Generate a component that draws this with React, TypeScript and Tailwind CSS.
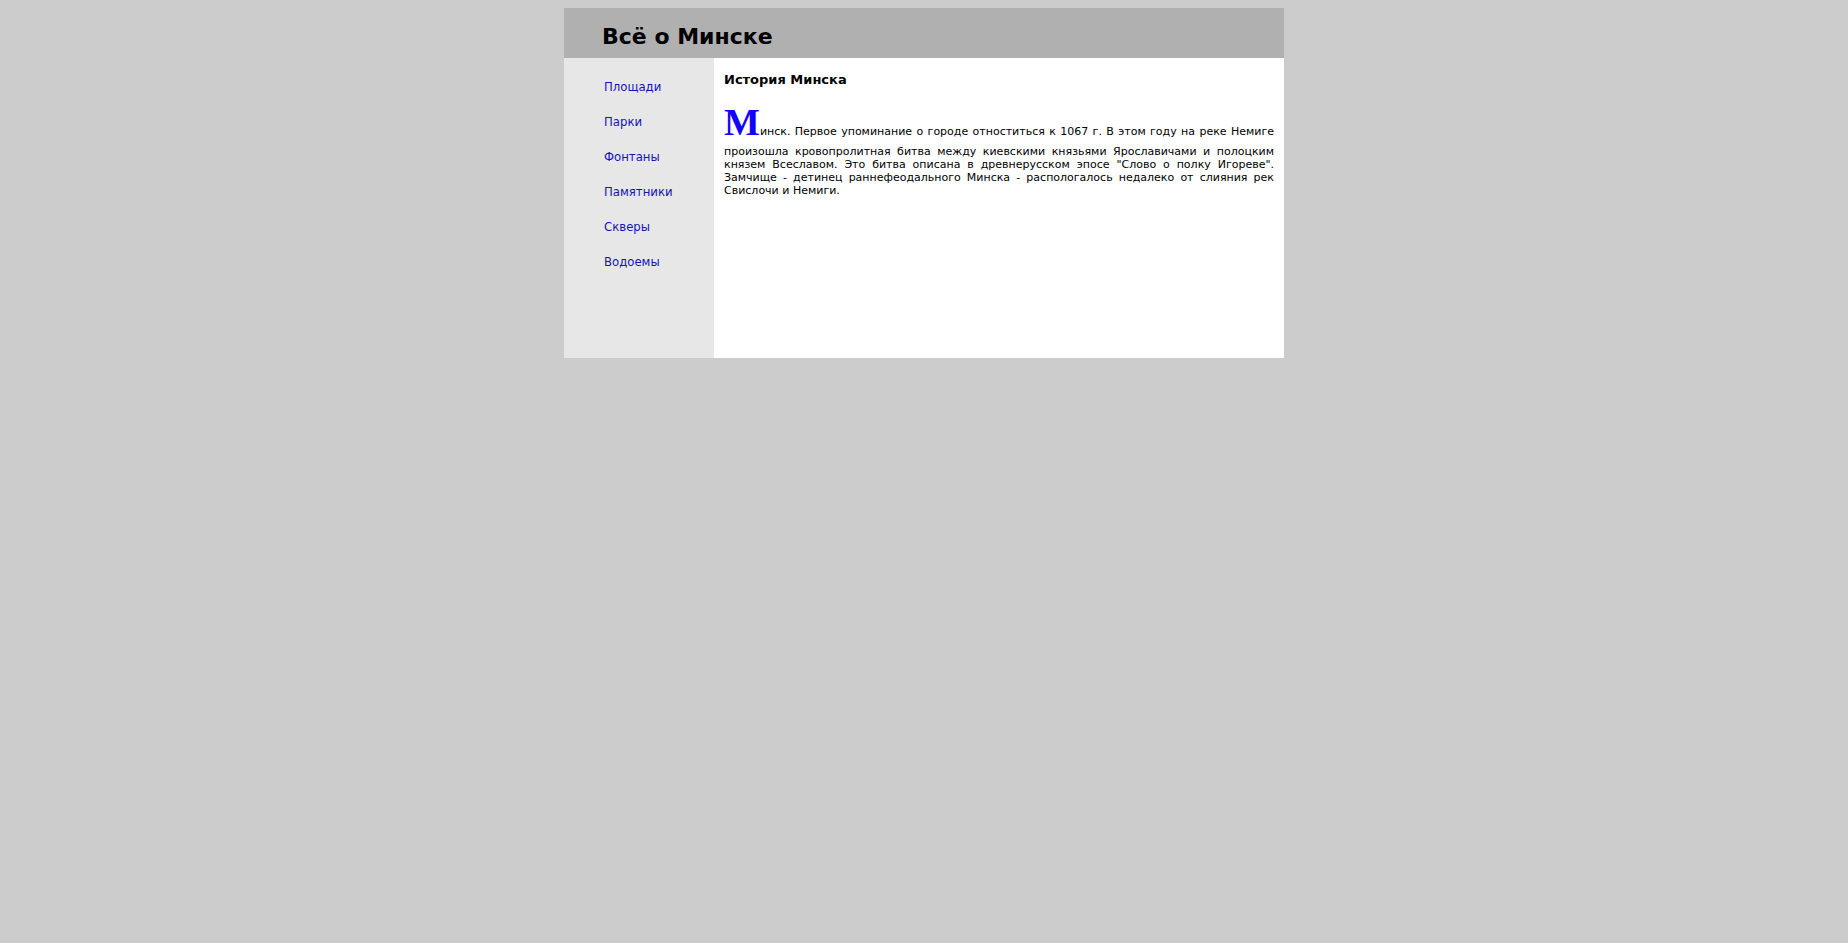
const links = ["Площади", "Парки", "Фонтаны", "Памятники", "Скверы", "Водоемы"];

export default function App() {
  return (
    <div className="min-h-screen bg-[#cccccc] py-2 font-['DejaVu_Sans',sans-serif] text-black">
      <div className="mx-auto w-full max-w-[720px] bg-white">
        <header className="bg-[#b0b0b0] pt-[18px] pr-4 pb-[10px] pl-[38px]">
          <h1 className="text-[22px] leading-[22px] font-bold">Всё о Минске</h1>
        </header>
        <div className="flex min-h-[300px]">
          <nav className="w-[150px] shrink-0 bg-[#e7e7e7] pt-[11px] pl-10 font-['DejaVu_Sans_Condensed','DejaVu_Sans',sans-serif]">
            <ul>
              {links.map((name) => (
                <li key={name}>
                  <a href="#" className="block text-[13px] leading-[35px] text-[#1414b8]">
                    {name}
                  </a>
                </li>
              ))}
            </ul>
          </nav>
          <main className="min-w-0 flex-1 px-[10px] pt-[14px]">
            <h2 className="text-[13px] leading-[15px] font-bold">История Минска</h2>
            <p className="mt-[13px] text-justify text-[11px] leading-[13px]">
              <span className="font-['Liberation_Serif',serif] text-[38px] leading-[45px] font-bold text-[#1400ff]">М</span>
              инск. Первое упоминание о городе отноститься к 1067 г. В этом году на реке Немиге произошла кровопролитная битва между киевскими князьями Ярославичами и полоцким князем Всеславом. Это битва описана в древнерусском эпосе "Слово о полку Игореве". Замчище - детинец раннефеодального Минска - распологалось недалеко от слияния рек Свислочи и Немиги.
            </p>
          </main>
        </div>
      </div>
    </div>
  );
}
